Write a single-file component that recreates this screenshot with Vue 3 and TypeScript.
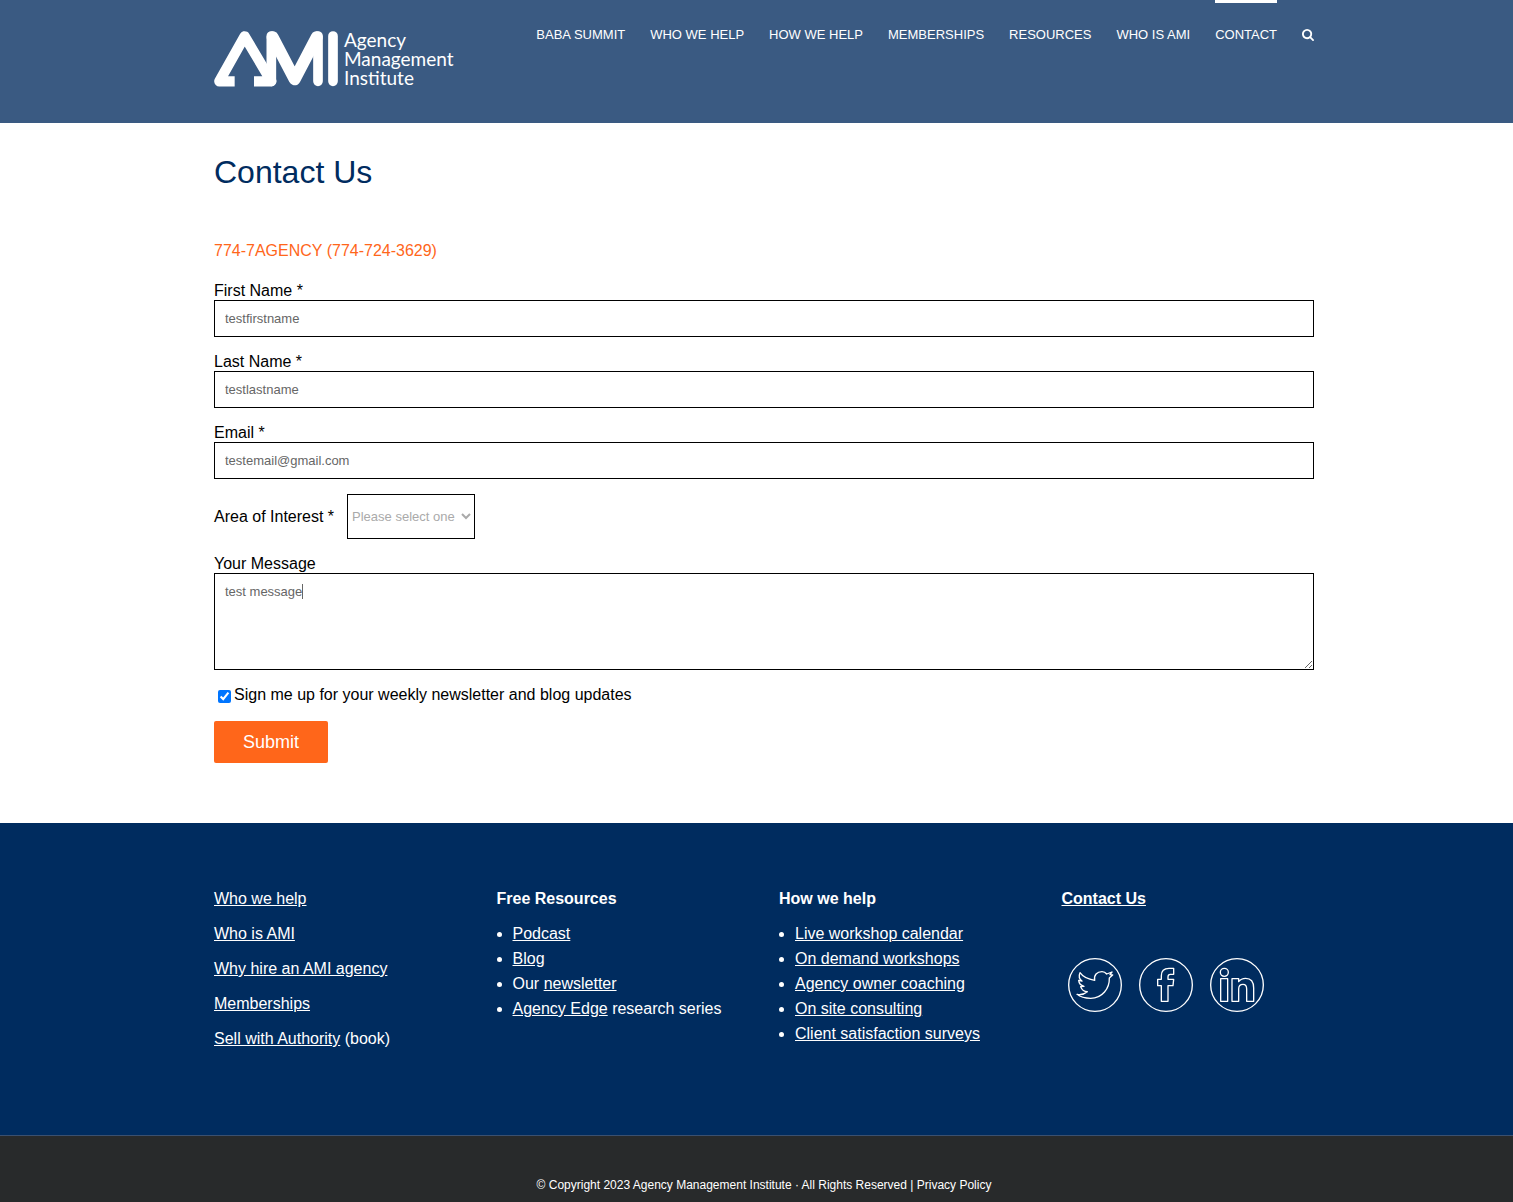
<script setup lang="ts">
import { ref } from 'vue'

const navItems = ['BABA Summit', 'Who We Help', 'How We Help', 'Memberships', 'Resources', 'Who Is AMI', 'Contact']
const activeItem = 'Contact'

const firstName = ref('testfirstname')
const lastName = ref('testlastname')
const email = ref('testemail@gmail.com')
const interest = ref('')
const message = ref('test message')
const newsletter = ref(true)

interface FooterLink {
  before?: string
  link: string
  after?: string
}

const aboutLinks: FooterLink[] = [
  { link: 'Who we help' },
  { link: 'Who is AMI' },
  { link: 'Why hire an AMI agency' },
  { link: 'Memberships' },
  { link: 'Sell with Authority', after: ' (book)' },
]

const lists: { title: string; items: FooterLink[] }[] = [
  {
    title: 'Free Resources',
    items: [
      { link: 'Podcast' },
      { link: 'Blog' },
      { before: 'Our ', link: 'newsletter' },
      { link: 'Agency Edge', after: ' research series' },
    ],
  },
  {
    title: 'How we help',
    items: [
      { link: 'Live workshop calendar' },
      { link: 'On demand workshops' },
      { link: 'Agency owner coaching' },
      { link: 'On site consulting' },
      { link: 'Client satisfaction surveys' },
    ],
  },
]
</script>

<template>
  <div class="page">
    <header class="site-header">
      <div class="container header-row">
        <a href="#" class="logo">
          <svg viewBox="30 30 372 171" width="124" height="57" aria-hidden="true">
            <g fill="none" stroke="#fff" stroke-linejoin="round" stroke-width="29">
              <path d="M92 184H46L122 49L202 184H150" stroke-width="31" />
              <path d="M206 52L272 178L338 52" stroke-width="36" stroke-linecap="round" />
              <path d="M202 48V184M342 48V184M387 48V184" stroke-linecap="round" />
            </g>
          </svg>
          <span class="logo-text">
            <span>Agency</span>
            <span>Management</span>
            <span>Institute</span>
          </span>
        </a>
        <nav class="main-nav">
          <a v-for="item in navItems" :key="item" href="#" :class="{ active: item === activeItem }">{{ item }}</a>
          <a href="#" class="search" aria-label="Search">
            <svg viewBox="64 128 1664 1664" width="12" height="12">
              <path fill="#fff" d="M1216 832q0-185-131.500-316.500t-316.500-131.500-316.500 131.500-131.500 316.500 131.500 316.500 316.500 131.500 316.500-131.500 131.500-316.500zm512 832q0 52-38 90t-90 38q-54 0-90-38l-343-342q-179 124-399 124-143 0-273.500-55.500t-225-150-150-225-55.500-273.500 55.500-273.500 150-225 225-150 273.500-55.500 273.500 55.500 225 150 150 225 55.500 273.500q0 220-124 399l343 343q37 37 37 90z" />
            </svg>
          </a>
        </nav>
      </div>
    </header>

    <main>
      <div class="container content">
        <h1>Contact Us</h1>
        <a href="#" class="phone">774-7AGENCY (774-724-3629)</a>
        <form @submit.prevent>
          <div class="field">
            <label for="first">First Name *</label>
            <input id="first" v-model="firstName" type="text" />
          </div>
          <div class="field">
            <label for="last">Last Name *</label>
            <input id="last" v-model="lastName" type="text" />
          </div>
          <div class="field">
            <label for="email">Email *</label>
            <input id="email" v-model="email" type="email" />
          </div>
          <div class="field inline">
            <label for="interest">Area of Interest *</label>
            <select id="interest" v-model="interest">
              <option value="">Please select one</option>
            </select>
          </div>
          <div class="field message">
            <label for="message">Your Message</label>
            <textarea id="message" v-model="message" rows="5"></textarea>
            <span class="caret"></span>
          </div>
          <div class="check">
            <input id="newsletter" v-model="newsletter" type="checkbox" />
            <label for="newsletter">Sign me up for your weekly newsletter and blog updates</label>
          </div>
          <button type="submit">Submit</button>
        </form>
      </div>
    </main>

    <footer>
      <div class="footer-main">
        <div class="container columns">
          <div>
            <p v-for="l in aboutLinks" :key="l.link"><a href="#">{{ l.link }}</a>{{ l.after }}</p>
          </div>
          <div v-for="list in lists" :key="list.title">
            <p><strong>{{ list.title }}</strong></p>
            <ul>
              <li v-for="l in list.items" :key="l.link">{{ l.before }}<a href="#">{{ l.link }}</a>{{ l.after }}</li>
            </ul>
          </div>
          <div>
            <p><a href="#"><strong>Contact Us</strong></a></p>
            <div class="social">
              <a href="#" aria-label="Twitter">
                <svg viewBox="0 0 162 162" width="54" height="54">
                  <circle cx="81" cy="81" r="79" />
                  <path d="M36 44C46 58 60 64 80 67C77 51 87 41 102 41C108 41 113 44 116 48L132 42L126 50L134 51L124 60C125 91 103 121 68 121C52 121 38 118 27 109C39 111 50 108 58 101C48 101 42 96 38 86L48 85C38 82 33 77 32 67L42 69C34 63 32 53 36 44Z" />
                </svg>
              </a>
              <a href="#" aria-label="Facebook">
                <svg viewBox="0 0 162 162" width="54" height="54">
                  <circle cx="81" cy="81" r="79" />
                  <path d="M67 130V83H56V64H67V53C67 38 76 31 90 31H104V49H94C89 49 87 51 87 56V64H104L102 83H87V130Z" />
                </svg>
              </a>
              <a href="#" aria-label="LinkedIn">
                <svg viewBox="0 0 162 162" width="54" height="54">
                  <circle cx="81" cy="81" r="79" />
                  <circle cx="43" cy="43" r="12" />
                  <path d="M32 62H53V130H32ZM66 62H86V71C91 64 98 61 107 61C124 61 131 72 131 90V130H110V93C110 84 107 79 99 79C91 79 86 84 86 93V130H66Z" />
                </svg>
              </a>
            </div>
          </div>
        </div>
      </div>
      <div class="copyright">
        <div class="container">© Copyright 2023 Agency Management Institute · All Rights Reserved | <a href="#">Privacy Policy</a></div>
      </div>
    </footer>
  </div>
</template>

<style>
body {
  background: #fff;
}
</style>

<style scoped>
.page {
  --gutter: 15px;
  font: 16px/19px "Liberation Sans", Arial, sans-serif;
  color: #000;
}
.page * {
  box-sizing: border-box;
}
.container {
  max-width: 1100px;
  margin: 0 auto;
}
.site-header,
main,
.footer-main,
.copyright {
  padding-left: var(--gutter);
}
.site-header {
  background: #3a5a82;
}
.header-row {
  display: flex;
  justify-content: space-between;
  align-items: flex-start;
  padding: 0 0 36px;
}
.logo {
  display: flex;
  gap: 6px;
  margin-top: 30px;
  color: #fff;
  text-decoration: none;
}
.logo svg {
  display: block;
}
.logo-text {
  font: 400 19px/19px Lato, sans-serif;
}
.logo-text span {
  display: block;
}
.main-nav {
  display: flex;
  gap: 25px;
}
.main-nav a {
  border-top: 3px solid transparent;
  padding-top: 22px;
  color: #fff;
  font-size: 13px;
  line-height: 20px;
  text-transform: uppercase;
  text-decoration: none;
}
.main-nav a.active {
  border-top-color: #fff;
}
.main-nav .search {
  display: flex;
  align-items: center;
}
.content {
  padding: 29px 0 60px;
}
h1 {
  margin: 0 0 49px;
  font-size: 32px;
  line-height: 40px;
  font-weight: 400;
  color: #002c5f;
}
.phone {
  display: block;
  margin-bottom: 21px;
  color: #ff661a;
  text-decoration: none;
}
.field {
  margin-bottom: 15px;
}
.field label {
  display: block;
}
.field input,
.field textarea {
  display: block;
  width: 100%;
  margin: 0;
  padding: 10px;
  border: 1px solid #000;
  border-radius: 0;
  background: #fff;
  color: #666;
  font: 13px/15px "Liberation Sans", Arial, sans-serif;
}
.field textarea {
  resize: vertical;
}
.message {
  position: relative;
}
.caret {
  position: absolute;
  left: 88px;
  top: 30px;
  width: 1px;
  height: 15px;
  background: #666;
}
.inline {
  display: flex;
  align-items: center;
  gap: 13px;
}
.inline select {
  width: 128px;
  height: 45px;
  padding: 0;
  border: 1px solid #000;
  border-radius: 0;
  background: #fff;
  color: #aaa;
  font: 13px "Liberation Sans", Arial, sans-serif;
}
.check {
  display: flex;
  margin-bottom: 17px;
}
.check input {
  width: 13px;
  height: 13px;
  margin: 5px 3px 0 4px;
}
button {
  display: block;
  width: 114px;
  height: 42px;
  padding: 0;
  border: 0;
  border-radius: 2px;
  background: #ff661a;
  color: #fff;
  font: 18px "Liberation Sans", Arial, sans-serif;
}
.footer-main {
  background: #002c5f;
  color: #fff;
  line-height: 25px;
}
.columns {
  display: grid;
  grid-template-columns: repeat(4, 1fr);
  gap: 30px;
  padding: 63px 0 74px;
}
.columns a {
  color: #fff;
}
.columns p {
  margin: 0 0 10px;
}
.columns ul {
  margin: 0;
  padding-left: 16px;
}
.social {
  display: flex;
  gap: 17px;
  margin-top: 47px;
  padding-left: 6px;
}
.social svg {
  display: block;
  fill: none;
  stroke: #fff;
  stroke-width: 4;
  stroke-linejoin: round;
}
.copyright {
  border-top: 1px solid #3a5070;
  background: #282a2b;
  padding-top: 39px;
  padding-bottom: 7px;
  color: #fff;
  font-size: 12px;
  line-height: 20px;
  text-align: center;
}
.copyright a {
  color: #fff;
  text-decoration: none;
}
</style>
